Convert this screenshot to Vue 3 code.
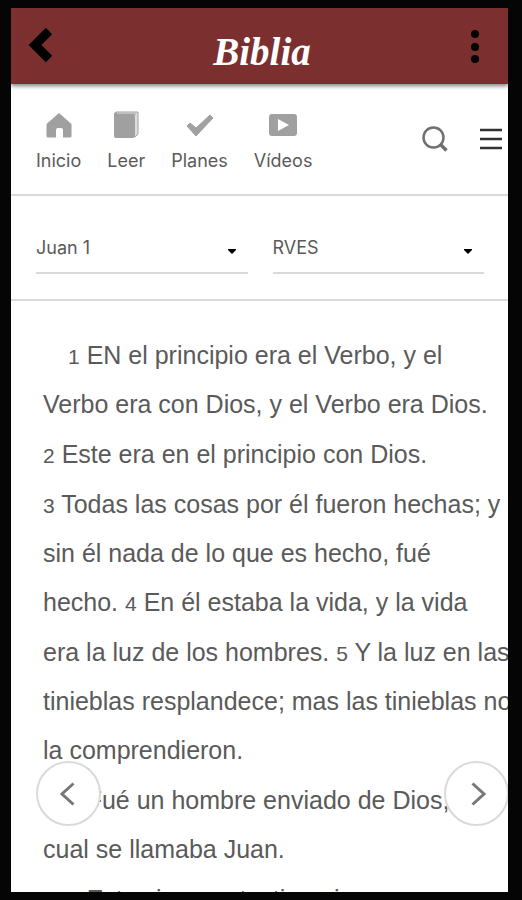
<template>
  <div class="device">
    <div class="screen">
      <header class="top-bar">
        <button class="bar-btn" type="button" aria-label="Volver">
          <svg width="26" height="36" viewBox="0 0 26 36">
            <path d="M21 3 L7 17 L21 31" fill="none" stroke="#000" stroke-width="9" />
          </svg>
        </button>
        <h1 class="title">Biblia</h1>
        <button class="bar-btn" type="button" aria-label="Opciones">
          <svg width="10" height="34" viewBox="0 0 10 34">
            <circle cx="5" cy="5" r="4" />
            <circle cx="5" cy="18" r="4" />
            <circle cx="5" cy="30" r="4" />
          </svg>
        </button>
      </header>

      <nav class="nav">
        <a v-for="item in navItems" :key="item.icon" href="#" class="nav-item" @click.prevent>
          <svg v-if="item.icon === 'home'" class="nav-icon" viewBox="0 0 30 28">
            <path d="M15 2 L27.500 13 V25 Q27.500 26.500 26 26.500 H19 V19 Q19 17 17 17 H14 Q12 17 12 19 V26.500 H4 Q2.500 26.500 2.500 25 V13 Z" />
          </svg>
          <svg v-else-if="item.icon === 'book'" class="nav-icon" viewBox="0 0 30 28">
            <path d="M5 1 H27 V24 L24 26 V4 H5 Z" fill="#dedede" />
            <path d="M27 1 V23 L24 26" fill="none" stroke="#a0a0a0" />
            <path d="M5 1 H27 M5 3 H25" fill="none" stroke="#a0a0a0" />
            <rect x="3" y="3" width="21" height="24" rx="2" />
            <path d="M3 6 V3 Q3 1 6 1 V5 Z" />
          </svg>
          <svg v-else-if="item.icon === 'check'" class="nav-icon" viewBox="0 0 30 28">
            <path d="M2 15 L5 12 L11 17 L25 4 L28 7 L11 25 Z" stroke="#a0a0a0" stroke-linejoin="round" />
          </svg>
          <svg v-else class="nav-icon" viewBox="0 0 30 28">
            <rect x="1" y="3" width="28" height="22" rx="3" />
            <path d="M10 8 L21 14 L10 20 Z" fill="#fff" />
          </svg>
          <span>{{ item.label }}</span>
        </a>
        <div class="tools">
          <button class="tool-btn" type="button" aria-label="Buscar">
            <svg width="26" height="26" viewBox="0 0 26 26" fill="none" stroke="#707070">
              <circle cx="11.500" cy="11.500" r="10" stroke-width="2.500" />
              <path d="M18 18 L24.500 24.500" stroke-width="3.500" />
            </svg>
          </button>
          <button class="tool-btn" type="button" aria-label="Menú">
            <svg width="22" height="26" viewBox="0 0 22 26" fill="none" stroke="#333" stroke-width="2.500">
              <path d="M0 4 H22 M0 13 H22 M0 22 H22" />
            </svg>
          </button>
        </div>
      </nav>

      <div class="pickers">
        <div class="picker">
          <select v-model="chapter" aria-label="Capítulo">
            <option>Juan 1</option>
            <option>Juan 2</option>
          </select>
          <svg class="caret" width="8" height="5" viewBox="0 0 8 5"><path d="M0 0 H8 V1 L4 5 L0 1 Z" /></svg>
        </div>
        <div class="picker">
          <select v-model="version" aria-label="Versión">
            <option>RVES</option>
          </select>
          <svg class="caret" width="8" height="5" viewBox="0 0 8 5"><path d="M0 0 H8 V1 L4 5 L0 1 Z" /></svg>
        </div>
      </div>

      <main class="reader">
        <p v-for="(passage, i) in passages" :key="i" :class="{ indent: passage.indent }">
          <span v-for="(line, j) in passage.lines" :key="j" class="line">
            <template v-for="(part, k) in line" :key="k">
              <small v-if="typeof part === 'number'">{{ part }}</small>
              <template v-else>{{ part }}</template>
            </template>
          </span>
        </p>
      </main>

      <button class="pager prev" type="button" aria-label="Capítulo anterior">
        <svg width="18" height="24" viewBox="0 0 18 24"><path d="M13.500 1.500 L2 12 L13.500 22.500" /></svg>
      </button>
      <button class="pager next" type="button" aria-label="Capítulo siguiente">
        <svg width="18" height="24" viewBox="0 0 18 24"><path d="M4.500 1.500 L16 12 L4.500 22.500" /></svg>
      </button>
    </div>
  </div>
</template>

<script setup>
import { ref } from 'vue'

const chapter = ref('Juan 1')
const version = ref('RVES')

const navItems = [
  { icon: 'home', label: 'Inicio' },
  { icon: 'book', label: 'Leer' },
  { icon: 'check', label: 'Planes' },
  { icon: 'video', label: 'Vídeos' },
]

// Los números son los versículos
const passages = [
  {
    indent: true,
    lines: [
      [1, ' EN el principio era el Verbo, y el'],
      ['Verbo era con Dios, y el Verbo era Dios.'],
    ],
  },
  { lines: [[2, ' Este era en el principio con Dios.']] },
  {
    lines: [
      [3, ' Todas las cosas por él fueron hechas; y'],
      ['sin él nada de lo que es hecho, fué'],
      ['hecho. ', 4, ' En él estaba la vida, y la vida'],
    ],
  },
  {
    lines: [
      ['era la luz de los hombres. ', 5, ' Y la luz en las'],
      ['tinieblas resplandece; mas las tinieblas no'],
      ['la comprendieron.'],
    ],
  },
  {
    indent: true,
    lines: [[6, ' Fué un hombre enviado de Dios, el'], ['cual se llamaba Juan.']],
  },
  { indent: true, lines: [[7, ' Este vino por testimonio, para']] },
]
</script>

<style>
body {
  margin: 0;
  background: #050505;
}
</style>

<style scoped>
.device {
  box-sizing: border-box;
  height: 100vh;
  padding: 8px 14px 8px 11px;
  background: #050505;
  font-family: Inter, "Liberation Sans", sans-serif;
}
.screen {
  position: relative;
  height: 100%;
  overflow: hidden;
  background: #fff;
}
button {
  padding: 0;
  border: none;
  background: none;
  cursor: pointer;
}
svg {
  display: block;
}
.top-bar {
  position: relative;
  display: flex;
  align-items: center;
  justify-content: space-between;
  height: 76px;
  padding: 0 28px 0 17px;
  background: #7b302f;
  box-shadow: 0 2px 4px rgba(0, 0, 0, 0.5);
}
.title {
  margin: 0;
  padding-top: 12px;
  color: #fff;
  font: italic bold 39px/44px "Liberation Serif", serif;
}
.nav {
  display: flex;
  gap: 26px;
  padding: 27px 6px 22px 25px;
  border-bottom: 2px solid #dadada;
}
.nav-item {
  display: flex;
  flex-direction: column;
  align-items: center;
  gap: 11px;
  color: #5a5a5a;
  font-size: 18px;
  line-height: 22px;
  text-decoration: none;
}
.nav-icon {
  width: 30px;
  height: 28px;
  fill: #a0a0a0;
}
.tools {
  display: flex;
  align-items: center;
  gap: 32px;
  margin-left: auto;
  padding-bottom: 5px;
}
.pickers {
  display: flex;
  gap: 25px;
  padding: 26px 24px 25px 25px;
  border-bottom: 2px solid #dadada;
}
.picker {
  display: grid;
  flex: 1;
  align-items: center;
  border-bottom: 2px solid #dadada;
}
.picker select {
  grid-area: 1 / 1;
  width: 100%;
  height: 50px;
  padding: 2px 0 0;
  border: none;
  border-radius: 0;
  background: none;
  color: #5a5a5a;
  font: 18px/22px Inter, "Liberation Sans", sans-serif;
  appearance: none;
}
.caret {
  grid-area: 1 / 1;
  justify-self: end;
  margin: 8px 12px 0 0;
  pointer-events: none;
}
.reader {
  display: flex;
  flex-direction: column;
  gap: 1px;
  padding: 30px 0 0 32px;
  color: #5a5a5a;
  font-family: "Liberation Sans", sans-serif;
  font-size: 25px;
  line-height: 49px;
  white-space: nowrap;
}
.reader p {
  margin: 0;
}
.indent {
  text-indent: 25px;
}
.line {
  display: block;
}
.line + .line {
  text-indent: 0;
}
.reader small {
  font-size: 21px;
  line-height: 1;
}
.pager {
  position: absolute;
  bottom: 66px;
  display: flex;
  align-items: center;
  justify-content: center;
  width: 65px;
  height: 65px;
  border: 2px solid #dadada;
  border-radius: 50%;
  background: #fff;
}
.pager path {
  fill: none;
  stroke: #777;
  stroke-width: 3;
}
.prev {
  left: 25px;
}
.next {
  right: -1px;
}
</style>
